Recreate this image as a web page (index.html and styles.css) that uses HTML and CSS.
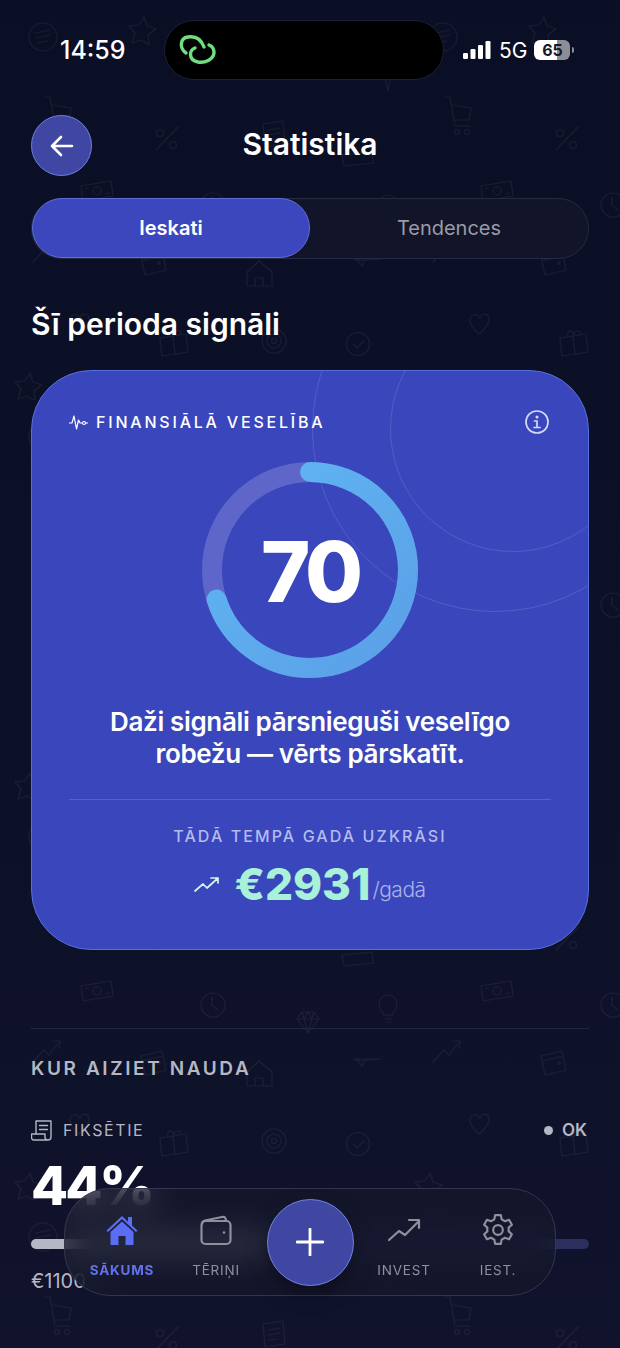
FILE: index.html
```html
<!DOCTYPE html>
<html lang="lv">
<head>
    <meta charset="UTF-8">
    <meta name="viewport" content="width=device-width, initial-scale=1.0">
    <title>Statistika</title>
    <link rel="stylesheet" href="styles.css">
</head>
<body>
    <div class="screen">
        <svg class="doodles" width="620" height="1348" aria-hidden="true">
            <defs>
                <pattern id="doodle" width="400" height="400" patternUnits="userSpaceOnUse">
                    <g fill="none" stroke="#fff" stroke-opacity="0.055" stroke-width="1.2" stroke-linecap="round" stroke-linejoin="round">
                        <!-- chat -->
                        <circle cx="43" cy="37" r="14"/><path d="M36 33l14-3M36 38l14-3M37 43l10-2"/>
                        <!-- star -->
                        <path d="M144 17l3 9 9 3-8 6 1 10-8-5-9 3 3-10-6-7 10-1z"/>
                        <path d="M30 373l3 9 9 3-8 6 1 10-8-5-9 3 3-10-6-7 10-1z"/>
                        <!-- bubble -->
                        <path d="M372 60c0-10 8-14 16-14s16 4 16 14-8 14-13 14l-3 17-4-17c-5 0-12-4-12-14z"/>
                        <!-- cart -->
                        <path d="M45 97h5l5 29h15M52 105l19 3-2 12H54"/><circle cx="57" cy="132" r="2.5"/><circle cx="67" cy="132" r="2.5"/>
                        <!-- percent -->
                        <path d="M178 127l-22 23"/><circle cx="160" cy="133" r="3.5"/><circle cx="173" cy="145" r="3.5"/>
                        <!-- doc -->
                        <path d="M263 124l20-3 2 23-20 3zM268 130l12-2M268 135l12-2M269 140l8-1"/>
                        <!-- wallet under title -->
                        <path d="M342 155l30-3 1 11-29 3z"/>
                        <!-- money -->
                        <path d="M81 186l30-5 2 15-30 5z"/><circle cx="97" cy="191" r="4"/><path d="M86 188l2 0M106 194l3-1"/>
                        <!-- clock -->
                        <circle cx="213" cy="205" r="12"/><path d="M212 197v8l6 5"/>
                        <!-- diamond -->
                        <path d="M302 212h12l5 7-11 14-11-14zM297 219h22M304 219l4 14 4-14M302 212l2 7 4-7 4 7 2-7"/>
                        <!-- bulb -->
                        <path d="M384 215c-1-3-5-5-5-11a9 9 0 0 1 18 0c0 6-4 8-5 11zM385 219h7M386 222h5"/>
                        <!-- trend -->
                        <path d="M33 262l11-12 5 5 11-14M53 241h7l-1 7"/>
                        <!-- wallet -->
                        <path d="M141 256l21-5 4 19-21 5zM142 261l21-5"/><circle cx="159" cy="263" r="1.2"/>
                        <!-- plane -->
                        <path d="M354 259l27 0-16 1-3 6-4-5-4-2M354 259l8 2"/>
                        <!-- house -->
                        <path d="M247 272l12-11 13 11v14h-25zM255 286v-8h8v8"/>
                        <!-- heart -->
                        <path d="M79 334c-7-6-10-11-9-15 1-5 7-6 10-1 1-5 8-5 9 0 1 5-3 10-10 16z"/>
                        <!-- gift -->
                        <path d="M160 338l26-4 2 18-26 4zM173 336l2 18M168 335c-2-5 5-6 6 0 1-6 8-5 6-1"/>
                        <!-- target -->
                        <circle cx="274" cy="341" r="12"/><circle cx="274" cy="341" r="7"/><circle cx="274" cy="341" r="2.5"/>
                        <!-- check -->
                        <circle cx="358" cy="344" r="11.5"/><path d="M353 344l4 4 7-7"/>
                    </g>
                </pattern>
            </defs>
            <rect width="620" height="1348" fill="url(#doodle)"/>
        </svg>

        <div class="content">
            <div class="status">
                <span class="time">14:59</span>
                <div class="notch">
                    <svg width="50" height="40" viewBox="0 0 50 40" fill="none" stroke="#6fe07f" stroke-width="3.4" stroke-linecap="round">
                        <path d="M15 23C8 18 9 8 17 7c7-1 13 2 16 10"/>
                        <path d="M24 18c-6 2-7 12 3 14 7 1 15-2 16-9 0-4-2-7-5-8"/>
                    </svg>
                </div>
                <div class="status-right">
                    <svg width="28" height="20" viewBox="0 0 28 20" fill="#fff">
                        <rect x="0" y="13" width="5" height="6" rx="1.2"/>
                        <rect x="7.500" y="9" width="5" height="10" rx="1.2"/>
                        <rect x="15" y="5" width="5" height="14" rx="1.2"/>
                        <rect x="22.500" y="1" width="5" height="18" rx="1.2"/>
                    </svg>
                    <span class="net">5G</span>
                    <span class="battery">65</span>
                    <span class="battery-tip"></span>
                </div>
            </div>

            <div class="header">
                <button class="back-btn">
                    <svg width="26" height="26" viewBox="0 0 26 26" fill="none" stroke="#fff" stroke-width="2.6" stroke-linecap="round" stroke-linejoin="round">
                        <path d="M23 13H3M12 4l-9 9 9 9"/>
                    </svg>
                </button>
                <h1>Statistika</h1>
            </div>

            <div class="tabs">
                <div class="tab active">Ieskati</div>
                <div class="tab">Tendences</div>
            </div>

            <h2 class="section-title">Šī perioda signāli</h2>

            <div class="card">
                <div class="card-circle big"></div>
                <div class="card-circle small"></div>
                <div class="card-head">
                    <div class="card-label">
                        <svg width="19" height="18" viewBox="0 0 19 18" fill="none" stroke="#fff" stroke-width="1.2" stroke-linecap="round" stroke-linejoin="round">
                            <path d="M0.500 10h2.500l2-7 2.500 13 2-9 1.500 3h2"/>
                            <circle cx="15" cy="10" r="1.500"/>
                            <path d="M16.500 10h2"/>
                        </svg>
                        FINANSIĀLĀ VESELĪBA
                    </div>
                    <svg width="26" height="26" viewBox="0 0 26 26" fill="none" stroke="#d5d9f5" stroke-width="1.7" stroke-linecap="round">
                        <circle cx="13" cy="13" r="11"/>
                        <path d="M10.500 12H13v6.500M10 18.500h6"/>
                        <circle cx="13" cy="8" r="0.700"/>
                    </svg>
                </div>

                <div class="ring">
                    <svg width="216" height="216" viewBox="0 0 216 216" fill="none" stroke-width="20">
                        <defs>
                            <linearGradient id="ringFill" x1="1" y1="0" x2="0" y2="1">
                                <stop offset="0" stop-color="#5fb7f5"/>
                                <stop offset="1" stop-color="#5b9fe6"/>
                            </linearGradient>
                        </defs>
                        <circle cx="108" cy="108" r="98" stroke="#5e66c9"/>
                        <circle cx="108" cy="108" r="98" stroke="url(#ringFill)" stroke-linecap="round" stroke-dasharray="431 616" transform="rotate(-90 108 108)"/>
                    </svg>
                    <span class="score">70</span>
                </div>

                <p class="message">Daži signāli pārsnieguši veselīgo robežu — vērts pārskatīt.</p>
                <div class="card-line"></div>
                <div class="save-label">TĀDĀ TEMPĀ GADĀ UZKRĀSI</div>
                <div class="save-row">
                    <svg width="26" height="16" viewBox="0 0 26 16" fill="none" stroke="#d8f5ec" stroke-width="1.700" stroke-linecap="round" stroke-linejoin="round">
                        <path d="M1 15l8-7 4 4 11-10M17 2h7v5"/>
                    </svg>
                    <span class="save-amount">€2931</span><span class="save-unit">/gadā</span>
                </div>
            </div>

            <div class="divider"></div>
            <div class="spend-title">KUR AIZIET NAUDA</div>

            <div class="spend-row">
                <div class="spend-name">
                    <svg width="22" height="22" viewBox="0 0 22 22" fill="none" stroke="#b5b7c4" stroke-width="1.400" stroke-linecap="round" stroke-linejoin="round">
                        <path d="M5 15V2h15v16c0 2-1 3-3 3H3c-2 0-2.500-1.500-2.500-3V15H14v3c0 2 1 3 3 3"/>
                        <path d="M8.500 6.500h8M8.500 10.500h8"/>
                    </svg>
                    FIKSĒTIE
                </div>
                <div class="spend-status"><span class="dot"></span>OK</div>
            </div>
            <div class="spend-pct">44%</div>
            <div class="bar"><div class="bar-fill" style="width: 44%"></div></div>
            <div class="spend-sum">€1100</div>
        </div>

        <nav class="nav">
            <div class="nav-item active">
                <svg width="34" height="34" viewBox="0 0 34 34" fill="#5b6cf5">
                    <path d="M17 3L1.500 17.500l1.500 1.500L17 6l14 13 1.500-1.500L27 12.500V4h-4v4.800z"/>
                    <path d="M5.500 19L17 8.500 28.500 19v13h-8v-9h-7v9h-8z"/>
                </svg>
                <span>SĀKUMS</span>
            </div>
            <div class="nav-item">
                <svg width="34" height="34" viewBox="0 0 34 34" fill="none" stroke="#8f909c" stroke-width="2.200" stroke-linecap="round" stroke-linejoin="round">
                    <path d="M3 11c0-2 1-3 3-3.500L23 4c3-.5 4 1 4 4"/>
                    <rect x="2.500" y="8" width="29" height="23" rx="4"/>
                    <circle cx="25" cy="19.500" r="1.300" fill="#8f909c" stroke="none"/>
                </svg>
                <span>TĒRIŅI</span>
            </div>
            <button class="add-btn">
                <svg width="28" height="28" viewBox="0 0 28 28" fill="none" stroke="#fff" stroke-width="2.800" stroke-linecap="round">
                    <path d="M14 1v26M1 14h26"/>
                </svg>
            </button>
            <div class="nav-item">
                <svg width="34" height="34" viewBox="0 0 34 34" fill="none" stroke="#8f909c" stroke-width="2.200" stroke-linecap="round" stroke-linejoin="round">
                    <path d="M2 27l10-9 6 4 13-13M22 7h10v8"/>
                </svg>
                <span>INVEST</span>
            </div>
            <div class="nav-item">
                <svg width="34" height="34" viewBox="0 0 24 24" fill="none" stroke="#8f909c" stroke-width="1.550" stroke-linecap="round" stroke-linejoin="round">
                    <path d="M10 1.500h4l.6 3 2.300 1.300 2.900-1 2 3.500-2.300 2c.1.900.1 1.800 0 2.700l2.300 2-2 3.500-2.900-1-2.300 1.300-.6 3h-4l-.6-3-2.300-1.300-2.900 1-2-3.500 2.300-2a10 10 0 0 1 0-2.700l-2.300-2 2-3.500 2.900 1 2.300-1.300z"/>
                    <circle cx="12" cy="12" r="3.400"/>
                </svg>
                <span>IEST.</span>
            </div>
        </nav>
    </div>
</body>
</html>
```

FILE: styles.css
```css
* {
    box-sizing: border-box;
}

body {
    margin: 0;
    background-color: #0d1128;
    font-family: Inter, "Liberation Sans", sans-serif;
    color: #fff;
}

.screen {
    position: relative;
    width: 620px;
    height: 1348px;
    overflow: hidden;
    background: linear-gradient(180deg, #0b0f25 0%, #0d1128 60%, #10132b 100%);
}

.doodles {
    position: absolute;
    top: 0;
    left: 0;
}

.content {
    position: relative;
    height: 100%;
    padding: 20px 31px 0;
}

/* status bar */
.status {
    display: flex;
    align-items: center;
    height: 60px;
    margin: 0 -31px;
    padding-left: 60px;
}

.time {
    width: 104px;
    font-size: 25px;
    font-weight: 500;
}

.notch {
    display: flex;
    align-items: center;
    width: 280px;
    height: 60px;
    padding-left: 6px;
    background-color: #000;
    border: 1px solid #1c2036;
    border-radius: 30px;
}

.status-right {
    display: flex;
    align-items: center;
    margin-left: 19px;
}

.net {
    margin-left: 8px;
    font-size: 21px;
    font-weight: 400;
}

.battery {
    width: 36px;
    height: 20px;
    margin-left: 7px;
    border-radius: 6px;
    background: linear-gradient(90deg, #fff 0%, #fff 64%, #8c8d96 64%, #8c8d96 100%);
    color: #15182c;
    font-size: 16px;
    font-weight: 700;
    line-height: 20px;
    text-align: center;
}

.battery-tip {
    width: 2px;
    height: 6px;
    margin-left: 2px;
    border-radius: 0 2px 2px 0;
    background-color: #8c8d96;
}

/* header */
.header {
    display: grid;
    grid-template-columns: 61px 1fr 61px;
    align-items: center;
    margin-top: 35px;
}

.back-btn {
    display: flex;
    align-items: center;
    justify-content: center;
    width: 61px;
    height: 61px;
    padding: 0;
    background-color: #3f47a3;
    border: 1.5px solid #6f7fdc;
    border-radius: 50%;
}

h1 {
    margin: 0;
    padding-bottom: 4px;
    font-size: 30px;
    font-weight: 600;
    text-align: center;
}

.tabs {
    display: flex;
    height: 61px;
    margin-top: 22px;
    background-color: #121529;
    border: 1.5px solid #262a42;
    border-radius: 31px;
}

.tab {
    flex: 1;
    color: #9a9ba8;
    font-size: 20px;
    font-weight: 400;
    line-height: 58px;
    text-align: center;
}

.tab.active {
    flex: none;
    width: 278px;
    height: 60px;
    margin: -1px 0 0 0;
    background-color: #3c46bd;
    border: 1px solid #5d6fdb;
    border-radius: 30px;
    color: #fff;
    font-weight: 600;
}

.section-title {
    margin: 46px 0 0;
    font-size: 30px;
    font-weight: 600;
    line-height: 38px;
}

/* main card */
.card {
    position: relative;
    height: 580px;
    margin-top: 27px;
    padding: 38px 37px 0;
    overflow: hidden;
    background-color: #3a46bc;
    border: 1.5px solid #5570dd;
    border-radius: 60px;
}

.card-circle {
    position: absolute;
    border: 1.5px solid rgba(255, 255, 255, 0.13);
    border-radius: 50%;
}

.card-circle.big {
    top: -125px;
    left: 280px;
    width: 366px;
    height: 366px;
}

.card-circle.small {
    top: -65px;
    left: 358px;
    width: 246px;
    height: 246px;
}

.card-head {
    position: relative;
    display: flex;
    align-items: center;
    justify-content: space-between;
    height: 26px;
    margin-right: 1px;
}

.card-label {
    display: flex;
    align-items: center;
    gap: 8px;
    font-size: 16px;
    font-weight: 500;
    letter-spacing: 2.8px;
}

.ring {
    position: relative;
    width: 216px;
    height: 216px;
    margin: 27px auto 0;
}

.score {
    position: absolute;
    top: 2px;
    left: 0;
    width: 100%;
    font-size: 84px;
    font-weight: 800;
    line-height: 216px;
    letter-spacing: -4px;
    text-align: center;
}

.message {
    position: relative;
    width: 440px;
    margin: 28px auto 0;
    font-size: 26px;
    font-weight: 600;
    line-height: 32px;
    letter-spacing: -0.35px;
    text-align: center;
}

.card-line {
    height: 1px;
    margin-top: 29px;
    background-color: #5561cf;
}

.save-label {
    margin-top: 26px;
    color: #b4bbec;
    font-size: 16px;
    font-weight: 500;
    line-height: 20px;
    letter-spacing: 2.1px;
    text-align: center;
}

.save-row {
    display: flex;
    align-items: center;
    justify-content: center;
    height: 50px;
    margin-top: 13px;
}

.save-row svg {
    margin-right: 14px;
}

.save-amount {
    color: #a9f1d9;
    font-size: 44px;
    font-weight: 800;
}

.save-unit {
    margin: 10px 0 0 2px;
    color: #a9b2ea;
    font-size: 21px;
    font-weight: 300;
    letter-spacing: -0.5px;
}

/* spending */
.divider {
    height: 1px;
    margin-top: 78px;
    background-color: #23263d;
}

.spend-title {
    margin-top: 28px;
    color: #b5b7c4;
    font-size: 19px;
    font-weight: 600;
    line-height: 24px;
    letter-spacing: 2.6px;
}

.spend-row {
    display: flex;
    align-items: center;
    justify-content: space-between;
    margin-top: 38px;
    color: #b5b7c4;
    font-size: 16px;
    line-height: 22px;
}

.spend-name {
    display: flex;
    align-items: center;
    gap: 10px;
    letter-spacing: 1.6px;
}

.spend-status {
    display: flex;
    align-items: center;
    gap: 9px;
    margin-right: 2px;
    font-size: 17px;
    font-weight: 600;
}

.dot {
    width: 9px;
    height: 9px;
    background-color: #b5b7c4;
    border-radius: 50%;
}

.spend-pct {
    margin-top: 15px;
    font-size: 54px;
    font-weight: 800;
    line-height: 60px;
    letter-spacing: -3px;
}

.bar {
    height: 10px;
    margin-top: 23px;
    background-color: #2c2f5e;
    border-radius: 5px;
}

.bar-fill {
    height: 100%;
    background-color: #b5b7c4;
    border-radius: 5px;
}

.spend-sum {
    margin-top: 20px;
    color: #b5b7c4;
    font-size: 20px;
    line-height: 24px;
}

/* bottom nav */
.nav {
    position: absolute;
    top: 1188px;
    left: 64px;
    display: grid;
    grid-template-columns: repeat(5, 94px);
    width: 492px;
    height: 108px;
    padding: 0 10px;
    background-color: rgba(22, 24, 44, 0.62);
    border: 1.5px solid #33364d;
    border-radius: 46px;
    -webkit-backdrop-filter: blur(16px);
    backdrop-filter: blur(16px);
}

.nav-item {
    display: flex;
    flex-direction: column;
    align-items: center;
    padding-top: 24px;
    color: #8f909c;
    font-size: 13.5px;
    line-height: 18px;
    letter-spacing: 0.8px;
}

.nav-item span {
    margin-top: 14px;
}

.nav-item.active {
    color: #6272ee;
    font-weight: 700;
}

.add-btn {
    display: flex;
    align-items: center;
    justify-content: center;
    align-self: center;
    justify-self: center;
    width: 87px;
    height: 87px;
    padding: 0;
    background-color: #3f47a3;
    border: 1.5px solid #7183e0;
    border-radius: 50%;
    box-shadow: 0 8px 20px rgba(0, 0, 0, 0.35);
}
```
